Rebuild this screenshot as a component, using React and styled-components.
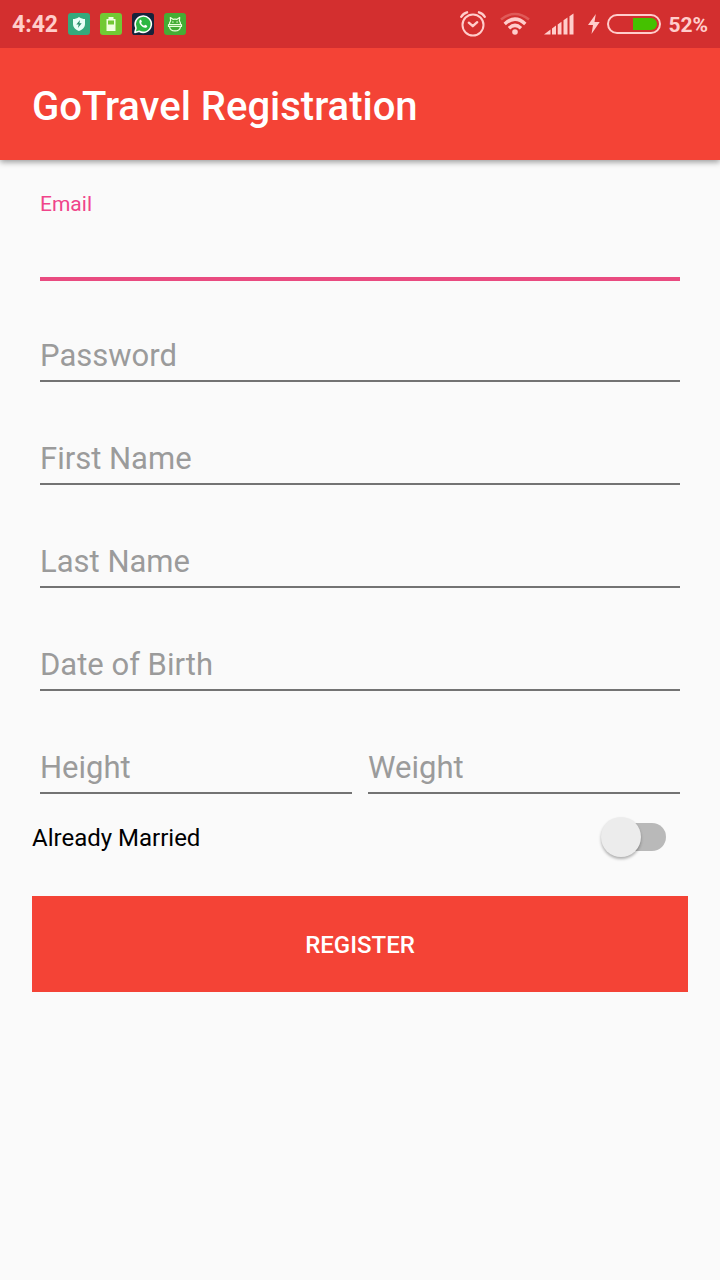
import React, { useId, useState } from "react";
import styled, { createGlobalStyle } from "styled-components";

const GlobalStyle = createGlobalStyle`
  *, *::before, *::after { box-sizing: border-box; }
  body {
    margin: 0;
    background: #fafafa;
    font-family: Roboto, "Liberation Sans", sans-serif;
  }
`;

const Screen = styled.div`
  min-height: 100vh;
  background: #fafafa;
`;

const StatusBar = styled.div`
  position: relative;
  z-index: 1;
  display: flex;
  align-items: center;
  justify-content: space-between;
  height: 48px;
  padding: 0 12px;
  background: #d32f2f;
  color: #ffcdcb;
`;

const StatusGroup = styled.div`
  display: flex;
  align-items: center;
  gap: ${(p) => p.$gap}px;

  svg {
    display: block;
    flex: none;
  }
`;

const StatusText = styled.span`
  font-size: ${(p) => p.$size}px;
  font-weight: 700;
  line-height: 28px;
  padding-top: 2px;
`;

const AppBar = styled.header`
  position: relative;
  display: flex;
  align-items: center;
  height: 112px;
  padding: 6px 32px 0;
  background: #f44336;
  box-shadow: 0 2px 6px rgba(0, 0, 0, 0.4);
`;

const Title = styled.h1`
  margin: 0;
  color: #ffffff;
  font-size: 40px;
  font-weight: 500;
  line-height: 48px;
`;

const Form = styled.form`
  padding: 18px 32px 32px;
`;

const Fields = styled.div`
  display: grid;
  padding: 0 8px;
`;

const FieldRow = styled.div`
  display: grid;
  grid-template-columns: 1fr 1fr;
  gap: 16px;
`;

const FieldBox = styled.div`
  display: grid;
  height: 103px;
  padding-bottom: ${(p) => (p.$active ? 0 : 2)}px;
`;

const FieldLabel = styled.label`
  grid-area: 1 / 1;
  align-self: ${(p) => (p.$raised ? "start" : "end")};
  padding: ${(p) => (p.$raised ? "14px 0 0" : "0 0 8px")};
  color: ${(p) => (p.$active ? "#f0448a" : "#9b9b9b")};
  font-size: ${(p) => (p.$raised ? 21 : 31)}px;
  line-height: ${(p) => (p.$raised ? 24 : 36)}px;
  pointer-events: none;
`;

const FieldInput = styled.input`
  grid-area: 1 / 1;
  align-self: end;
  width: 100%;
  height: 60px;
  padding: 0 0 4px;
  border: 0;
  border-bottom: ${(p) => (p.$active ? "4px solid #e94b80" : "2px solid #737373")};
  border-radius: 0;
  outline: 0;
  background: transparent;
  color: #212121;
  font: inherit;
  font-size: 31px;
`;

const SwitchRow = styled.div`
  display: flex;
  align-items: center;
  justify-content: space-between;
  height: 82px;
  padding-right: 22px;
`;

const SwitchLabel = styled.label`
  padding-top: 2px;
  color: #000000;
  font-size: 24px;
  line-height: 28px;
`;

const Switch = styled.input`
  appearance: none;
  display: grid;
  align-items: center;
  width: 65px;
  height: 40px;
  margin: 0;
  cursor: pointer;

  &::before,
  &::after {
    content: "";
    grid-area: 1 / 1;
  }
  &::before {
    height: 28px;
    margin-left: 2px;
    border-radius: 14px;
    background: ${(p) => (p.checked ? "#f4a0bb" : "#b9b9b9")};
  }
  &::after {
    justify-self: ${(p) => (p.checked ? "end" : "start")};
    width: 40px;
    height: 40px;
    border-radius: 50%;
    background: ${(p) => (p.checked ? "#ff4081" : "#ececec")};
    box-shadow: 0 2px 3px rgba(0, 0, 0, 0.3);
  }
`;

const RegisterButton = styled.button`
  display: block;
  width: 100%;
  height: 96px;
  margin-top: 18px;
  padding: 2px 0 0;
  border: 0;
  background: #f44336;
  color: #ffffff;
  font: inherit;
  font-size: 24px;
  font-weight: 500;
  text-transform: uppercase;
  cursor: pointer;
`;

function SecurityIcon() {
  return (
    <svg width="22" height="22" viewBox="0 0 22 22">
      <rect width="22" height="22" rx="3" fill="#35a97c" />
      <path d="M11 4 C13 5.600 15 6 17 6 V11 C17 14.500 14 17 11 18 C8 17 5 14.500 5 11 V6 C7 6 9 5.600 11 4Z" fill="#e9fff6" />
      <path d="M12 7 L8.300 11.600 H10.700 L9.900 15 L13.700 10.200 H11.400Z" fill="#278e68" />
    </svg>
  );
}

function BatteryAppIcon() {
  return (
    <svg width="22" height="22" viewBox="0 0 22 22">
      <rect width="22" height="22" rx="3" fill="#72c934" />
      <path d="M8.500 4 H13.500 V6 H15.500 V18 H6.500 V6 H8.500Z" fill="#f1ffdf" />
      <rect x="8" y="7.500" width="6" height="4" fill="#72c934" />
    </svg>
  );
}

function WhatsAppIcon() {
  return (
    <svg width="22" height="22" viewBox="0 0 23 23">
      <rect width="23" height="23" rx="3" fill="#16233b" />
      <path d="M3 20.300 L4.200 15.700 A8.500 8.500 0 1 1 7.500 19.100Z" fill="#2cb742" stroke="#ffffff" strokeWidth="1.600" strokeLinejoin="round" />
      <path d="M8.200 7.300 C8.700 6.800 9.500 6.900 9.700 7.500 L10.300 9 C10.400 9.500 9.600 10.100 9.600 10.400 C10.200 11.700 11.200 12.700 12.600 13.200 C13 13.200 13.500 12.200 13.900 12.300 L15.700 13.200 C16.200 13.500 15.800 14.800 15.100 15.200 C11.700 16.800 5.800 10.700 8.200 7.300Z" fill="#ffffff" />
    </svg>
  );
}

function DroidIcon() {
  return (
    <svg width="22" height="22" viewBox="0 0 22 22" fill="none" stroke="#eaffd9" strokeWidth="1.200" strokeLinecap="round" strokeLinejoin="round">
      <rect width="22" height="22" rx="3" fill="#45ad34" stroke="none" />
      <path d="M5.500 11.500 C5.300 9.500 6 8.500 6.600 7.800 L6.300 4.500 L9 6.300 C10.300 6 11.700 6 13 6.300 L15.700 4.500 L15.400 7.800 C16 8.500 16.700 9.500 16.500 11.500" />
      <path d="M4.500 11.700 H17.500 V13.500 H4.500Z" />
      <path d="M5.500 13.700 C6.200 19.300 15.800 19.300 16.500 13.700" />
      <path d="M8.500 9 H9.200 M12.800 9 H13.500" />
    </svg>
  );
}

function AlarmIcon() {
  return (
    <svg width="26" height="26" viewBox="0 0 26 26" fill="none" stroke="#ffcdcb" strokeWidth="2" strokeLinecap="round" strokeLinejoin="round">
      <circle cx="13" cy="14" r="10.500" />
      <path d="M8.800 11.700 L12.800 15.200 L17.200 11.200" strokeWidth="2.400" />
      <path d="M1.300 5.800 Q3.200 2.300 7 1.300 M24.700 5.800 Q22.800 2.300 19 1.300" strokeWidth="2.400" />
    </svg>
  );
}

function WifiIcon() {
  return (
    <svg width="30" height="24" viewBox="0 0 30 24" fill="none" stroke="#ffcdcb" strokeWidth="3">
      <path d="M1 7.500 Q15 -3.500 29 7.500" stroke="#e05a58" strokeWidth="2.600" />
      <path d="M4.700 12 Q15 2.200 25.300 12" strokeWidth="3.400" />
      <path d="M9 16.200 Q15 10.600 21 16.200" strokeWidth="3.400" />
      <circle cx="15" cy="20" r="2.800" fill="#ffcdcb" stroke="none" />
    </svg>
  );
}

function SignalIcon() {
  return (
    <svg width="30" height="22" viewBox="0 0 30 22" fill="#ffcdcb">
      <path d="M0 21.500 L6.500 16.500 V21.500Z" />
      <path d="M8 21.500 V15.500 L12 12.500 V21.500Z" />
      <path d="M13.700 21.500 V11.500 L17.500 8.700 V21.500Z" />
      <path d="M19.500 21.500 V7.300 L23.500 4.500 V21.500Z" />
      <path d="M25.500 21.500 V3.200 L29.500 0.500 V21.500Z" />
    </svg>
  );
}

function BoltIcon() {
  return (
    <svg width="12" height="20" viewBox="0 0 12 20" fill="#ffcdcb">
      <path d="M7.800 0 L0 11 H5 L3.500 20 L11.700 8 H6.500Z" />
    </svg>
  );
}

function BatteryIcon() {
  return (
    <svg width="54" height="20" viewBox="0 0 54 20">
      <rect x="1" y="1" width="52" height="18" rx="9" fill="none" stroke="#ffcdcb" strokeWidth="2" />
      <path d="M26 4 H44 A6 6 0 0 1 44 16 H26Z" fill="#45c100" />
    </svg>
  );
}

function Field({ label, type = "text", active = false }) {
  const id = useId();
  const [value, setValue] = useState("");
  const raised = active || value !== "";
  return (
    <FieldBox $active={active}>
      <FieldLabel htmlFor={id} $active={active} $raised={raised}>
        {label}
      </FieldLabel>
      <FieldInput
        id={id}
        type={type}
        value={value}
        $active={active}
        onChange={(event) => setValue(event.target.value)}
      />
    </FieldBox>
  );
}

export default function App() {
  const [married, setMarried] = useState(false);
  return (
    <Screen>
      <GlobalStyle />
      <StatusBar>
        <StatusGroup $gap={10}>
          <StatusText $size={23}>4:42</StatusText>
          <SecurityIcon />
          <BatteryAppIcon />
          <WhatsAppIcon />
          <DroidIcon />
        </StatusGroup>
        <StatusGroup $gap={14}>
          <AlarmIcon />
          <WifiIcon />
          <SignalIcon />
          <StatusGroup $gap={7}>
            <BoltIcon />
            <BatteryIcon />
            <StatusText $size={21}>52%</StatusText>
          </StatusGroup>
        </StatusGroup>
      </StatusBar>
      <AppBar>
        <Title>GoTravel Registration</Title>
      </AppBar>
      <Form onSubmit={(event) => event.preventDefault()}>
        <Fields>
          <Field label="Email" type="email" active />
          <Field label="Password" type="password" />
          <Field label="First Name" />
          <Field label="Last Name" />
          <Field label="Date of Birth" />
          <FieldRow>
            <Field label="Height" />
            <Field label="Weight" />
          </FieldRow>
        </Fields>
        <SwitchRow>
          <SwitchLabel htmlFor="married">Already Married</SwitchLabel>
          <Switch
            id="married"
            type="checkbox"
            role="switch"
            checked={married}
            onChange={(event) => setMarried(event.target.checked)}
          />
        </SwitchRow>
        <RegisterButton type="submit">Register</RegisterButton>
      </Form>
    </Screen>
  );
}
